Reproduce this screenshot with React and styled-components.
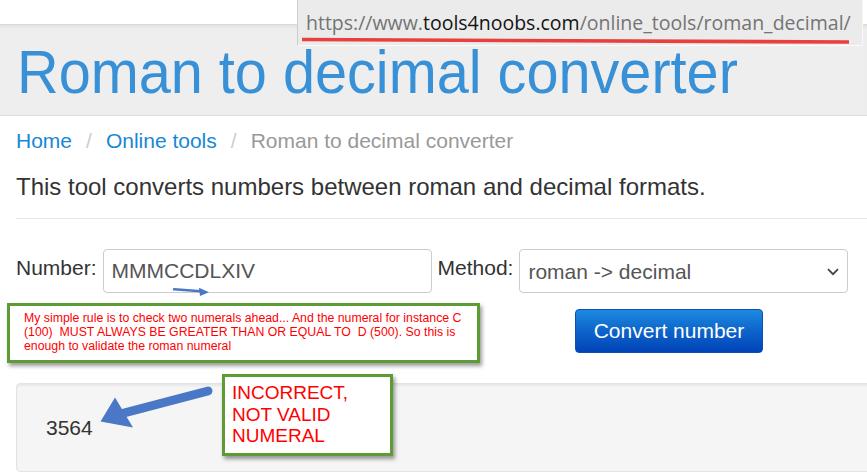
import React from "react";
import styled, { createGlobalStyle } from "styled-components";

const GlobalStyle = createGlobalStyle`
  html, body { margin: 0; padding: 0; background: #fff; overflow: hidden; }
  body { font-family: "Liberation Sans", Arial, sans-serif; color: #333; }
  * { box-sizing: border-box; }
`;

const Screen = styled.div`
  position: relative;
  width: 867px;
  height: 474px;
  overflow: hidden;
  background: #fff;
`;

const ChromeBar = styled.div`
  height: 25px;
  background: #fff;
  border-bottom: 1px solid #d9d9d9;
`;

const Jumbotron = styled.header`
  height: 91px;
  background: #eeeeee;
  border-bottom: 1px solid #dcdcdc;
  padding: 12px 0 0 17px;
  box-shadow: inset 0 4px 4px -3px rgba(0, 0, 0, 0.08);
`;

const Title = styled.h1`
  margin: 0;
  font-size: 61px;
  line-height: 70px;
  font-weight: normal;
  color: #3890d6;
  white-space: nowrap;
  transform: scaleX(0.945);
  transform-origin: 0 0;
`;

const Container = styled.main`
  width: 900px;
  padding: 10px 0 0 16px;
`;

const Breadcrumb = styled.nav`
  display: flex;
  align-items: baseline;
  font-size: 21px;
  line-height: 30px;
  white-space: nowrap;
`;

const Crumb = styled.a`
  color: ${(p) => (p.$active ? "#999999" : "#1688d6")};
  text-decoration: none;
`;

const Sep = styled.span`
  color: #cccccc;
  margin: 0 14px;
`;

const Lead = styled.p`
  margin: 14px 0 0;
  font-size: 24px;
  line-height: 34px;
  color: #333;
  white-space: nowrap;
`;

const Rule = styled.hr`
  margin: 14px 0 0;
  border: 0;
  border-top: 1px solid #e6e6e6;
`;

const FormRow = styled.form`
  margin-top: 30px;
  display: flex;
  align-items: center;
  height: 44px;
  gap: 6px;
`;

const Label = styled.label`
  font-size: 21px;
  color: #333;
  margin-bottom: 6px;
  white-space: nowrap;
`;

const Field = styled.input`
  width: 329px;
  height: 44px;
  border: 1px solid #cccccc;
  border-radius: 4px;
  padding: 0 8px;
  font-family: inherit;
  font-size: 21px;
  color: #555;
  background: #fff;
  outline: none;
`;

const SelectWrap = styled.div`
  position: relative;
  width: 329px;
  height: 44px;
`;

const Select = styled.select`
  appearance: none;
  -webkit-appearance: none;
  width: 100%;
  height: 100%;
  border: 1px solid #cccccc;
  border-radius: 4px;
  padding: 0 30px 0 8px;
  font-family: inherit;
  font-size: 21px;
  color: #555;
  background: #fff;
  outline: none;
`;

const Chevron = styled.svg`
  position: absolute;
  right: 9px;
  top: 19px;
  pointer-events: none;
`;

const ButtonRow = styled.div`
  margin-top: 16px;
  padding-left: 559px;
  display: flex;
`;

const Button = styled.button`
  width: 188px;
  height: 44px;
  border: 1px solid #0a50b4;
  border-radius: 4px;
  background: linear-gradient(to bottom, #1d8ae0 0%, #0d64ca 50%, #0043b8 100%);
  color: #fff;
  font-family: inherit;
  font-size: 21px;
  padding: 0;
`;

const Well = styled.section`
  margin-top: 30px;
  height: 89px;
  background: #f5f5f5;
  border: 1px solid #e3e3e3;
  border-radius: 4px;
  box-shadow: inset 0 2px 2px rgba(0, 0, 0, 0.05);
  display: flex;
  align-items: center;
  padding-left: 29px;
  font-size: 21px;
  color: #333;
`;

/* overlays pasted over the screenshot */

const UrlBar = styled.div`
  position: absolute;
  left: 297px;
  top: 0;
  width: 566px;
  height: 46px;
  background: #ebebeb;
  border-left: 1px solid #cdcdcd;
  border-right: 1px solid #f7f7f7;
  border-bottom: 1px solid #fbfbfb;
  padding: 10px 0 0 8px;
  font-family: "Open Sans", "Noto Sans", sans-serif;
  font-size: 19.5px;
  line-height: 26px;
  color: #747474;
  white-space: nowrap;
`;

const Host = styled.span`
  color: #141414;
`;

const Underline = styled.svg`
  position: absolute;
  left: 0;
  top: 0;
`;

const Note = styled.div`
  position: absolute;
  left: ${(p) => p.$x}px;
  top: ${(p) => p.$y}px;
  width: ${(p) => p.$w}px;
  height: ${(p) => p.$h}px;
  background: #fff;
  border: 3px solid #5f9b34;
  box-shadow: 2px 3px 4px rgba(0, 0, 0, 0.4);
  color: #ff0000;
  font-family: "Liberation Sans", Arial, sans-serif;
  white-space: pre;
`;

const SmallNote = styled(Note)`
  padding: 5px 0 0 14px;
  font-size: 12.3px;
  line-height: 14px;
`;

const BigNote = styled(Note)`
  padding: 5px 0 0 7px;
  font-size: 19px;
  line-height: 21.5px;
`;

const ArrowSvg = styled.svg`
  position: absolute;
  overflow: visible;
`;

export default function App() {
  return (
    <>
      <GlobalStyle />
      <Screen>
        <ChromeBar />
        <Jumbotron>
          <Title>Roman to decimal converter</Title>
        </Jumbotron>
        <Container>
          <Breadcrumb>
            <Crumb href="#">Home</Crumb>
            <Sep>/</Sep>
            <Crumb href="#">Online tools</Crumb>
            <Sep>/</Sep>
            <Crumb $active>Roman to decimal converter</Crumb>
          </Breadcrumb>
          <Lead>This tool converts numbers between roman and decimal formats.</Lead>
          <Rule />
          <FormRow onSubmit={(e) => e.preventDefault()}>
            <Label htmlFor="num">Number:</Label>
            <Field id="num" defaultValue="MMMCCDLXIV" />
            <Label htmlFor="method">Method:</Label>
            <SelectWrap>
              <Select id="method" defaultValue="r2d">
                <option value="r2d">roman -&gt; decimal</option>
                <option value="d2r">decimal -&gt; roman</option>
              </Select>
              <Chevron width="12" height="8" viewBox="0 0 12 8">
                <polyline points="1,1.2 6,6.2 11,1.2" fill="none" stroke="#444" strokeWidth="1.8" />
              </Chevron>
            </SelectWrap>
          </FormRow>
          <ButtonRow>
            <Button type="button">Convert number</Button>
          </ButtonRow>
          <Well>3564</Well>
        </Container>

        <UrlBar>
          https://www.<Host>tools4noobs.com</Host>/online_tools/roman_decimal/
          <Underline width="566" height="46" viewBox="297 0 566 46">
            <line x1="301" y1="39.5" x2="848" y2="42" stroke="#e8403f" strokeWidth="3.6" />
          </Underline>
        </UrlBar>

        <ArrowSvg style={{ left: 168, top: 284 }} width="46" height="14" viewBox="168 284 46 14">
          <line x1="174" y1="289.3" x2="201" y2="291.2" stroke="#4a78c6" strokeWidth="2.4" strokeLinecap="round" />
          <polygon points="209,292.3 199,287.8 200,296" fill="#4a78c6" />
        </ArrowSvg>

        <SmallNote $x={7} $y={303} $w={473} $h={60}>
          {"My simple rule is to check two numerals ahead... And the numeral for instance C\n(100)  MUST ALWAYS BE GREATER THAN OR EQUAL TO  D (500). So this is\nenough to validate the roman numeral"}
        </SmallNote>

        <ArrowSvg style={{ left: 95, top: 383 }} width="120" height="50" viewBox="95 383 120 50">
          <line x1="208" y1="391" x2="124" y2="413" stroke="#4a78c6" strokeWidth="9" strokeLinecap="round" />
          <polygon points="100.5,421.5 115,397.5 133,427.5" fill="#4a78c6" />
        </ArrowSvg>

        <BigNote $x={222} $y={374} $w={171} $h={82}>
          {"INCORRECT,\nNOT VALID\nNUMERAL"}
        </BigNote>
      </Screen>
    </>
  );
}
